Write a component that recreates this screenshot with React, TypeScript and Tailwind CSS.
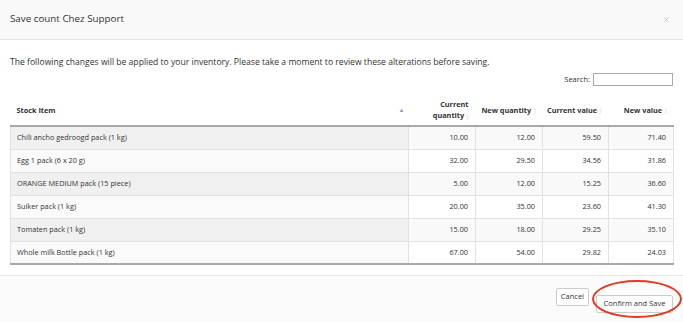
import { X } from "lucide-react";

interface Row {
  name: string;
  currentQty: string;
  newQty: string;
  currentValue: string;
  newValue: string;
}

const rows: Row[] = [
  { name: "Chili ancho gedroogd pack (1 kg)", currentQty: "10.00", newQty: "12.00", currentValue: "59.50", newValue: "71.40" },
  { name: "Egg 1 pack (6 x 20 g)", currentQty: "32.00", newQty: "29.50", currentValue: "34.56", newValue: "31.86" },
  { name: "ORANGE MEDIUM pack (15 piece)", currentQty: "5.00", newQty: "12.00", currentValue: "15.25", newValue: "36.60" },
  { name: "Suiker pack (1 kg)", currentQty: "20.00", newQty: "35.00", currentValue: "23.60", newValue: "41.30" },
  { name: "Tomaten pack (1 kg)", currentQty: "15.00", newQty: "18.00", currentValue: "29.25", newValue: "35.10" },
  { name: "Whole milk Bottle pack (1 kg)", currentQty: "67.00", newQty: "54.00", currentValue: "29.82", newValue: "24.03" },
];

function SortBoth() {
  return (
    <span className="ml-[2px] inline-block align-middle text-[7px] leading-none text-[#e6e6e6]">)</span>
  );
}

export default function App() {
  return (
    <div
      className="flex h-[322px] w-[683px] flex-col overflow-hidden bg-white text-[#333]"
      style={{ fontFamily: '"Open Sans", "Liberation Sans", sans-serif' }}
    >
      {/* header */}
      <div className="flex h-[40px] shrink-0 items-center justify-between border-b border-[#e5e5e5] bg-[#f9f9f9] pl-[10px] pr-[13px]">
        <h1 className="text-[9.8px] font-normal">Save count Chez Support</h1>
        <X className="h-[7px] w-[7px] text-[#bbb]" strokeWidth={3} />
      </div>

      {/* body */}
      <div className="flex h-[235px] shrink-0 flex-col px-[10px] pt-[16px]">
        <p className="text-[8.6px] leading-[12px]">
          The following changes will be applied to your inventory. Please take a moment to review these
          alterations before saving.
        </p>
        <div className="mt-[5px] flex items-center justify-end gap-[3px] text-[7.5px]">
          <span>Search:</span>
          <input className="h-[13px] w-[80px] border border-[#aaa] bg-white" />
        </div>

        <table className="mt-[9px] w-[663px] table-fixed border-collapse text-[7.3px] text-[#333]">
          <colgroup>
            <col className="w-[398px]" />
            <col className="w-[67px]" />
            <col className="w-[67px]" />
            <col className="w-[66px]" />
            <col className="w-[65px]" />
          </colgroup>
          <thead>
            <tr className="h-[31px] border-b-2 border-[#a9a9a9] font-bold">
              <th className="relative px-[6px] text-left">
                Stock Item
                <span className="absolute right-[4px] top-1/2 -translate-y-1/2 text-[6px] text-[#8c99cf]">▲</span>
              </th>
              <th className="pr-[7px] text-right leading-[11px]">
                Current
                <br />
                quantity
                <SortBoth />
              </th>
              <th className="pr-[7px] text-right">
                New quantity
                <SortBoth />
              </th>
              <th className="pr-[7px] text-right">
                Current value
                <SortBoth />
              </th>
              <th className="pr-[7px] text-right">
                New value
                <SortBoth />
              </th>
            </tr>
          </thead>
          <tbody>
            {rows.map((row, i) => {
              const odd = i % 2 === 0;
              return (
                <tr
                  key={row.name}
                  className={`h-[23px] border-t border-[#e2e2e2] ${odd ? "bg-[#f9f9f9]" : "bg-white"}`}
                >
                  <td
                    className={`border-l border-r border-[#e2e2e2] px-[6px] ${odd ? "bg-[#f0f0f0]" : "bg-[#fafafa]"}`}
                  >
                    {row.name}
                  </td>
                  <td className="border-r border-[#e2e2e2] pr-[7px] text-right">{row.currentQty}</td>
                  <td className="border-r border-[#e2e2e2] pr-[7px] text-right">{row.newQty}</td>
                  <td className="border-r border-[#e2e2e2] pr-[7px] text-right">{row.currentValue}</td>
                  <td className="border-r border-[#e2e2e2] pr-[7px] text-right">{row.newValue}</td>
                </tr>
              );
            })}
            <tr className="border-t-2 border-[#a9a9a9]">
              <td colSpan={5} />
            </tr>
          </tbody>
        </table>
      </div>

      {/* footer */}
      <div className="flex flex-1 items-start justify-end gap-[7px] border-t border-[#e5e5e5] bg-[#fbfbfb] pr-[10px] pt-[12px]">
        <button className="h-[18px] rounded-[2px] border border-[#ccc] bg-white px-[4px] text-[7.5px] text-[#333]">
          Cancel
        </button>
        <div className="relative">
          <button className="h-[18px] w-[77px] rounded-[2px] border border-[#ccc] bg-white text-[7.5px] text-[#333]">
            Confirm and Save
          </button>
          <div className="pointer-events-none absolute left-[-4px] top-[-8px] h-[38px] w-[90px] rounded-[50%] border-2 border-[#e2391f]" />
        </div>
      </div>
    </div>
  );
}
